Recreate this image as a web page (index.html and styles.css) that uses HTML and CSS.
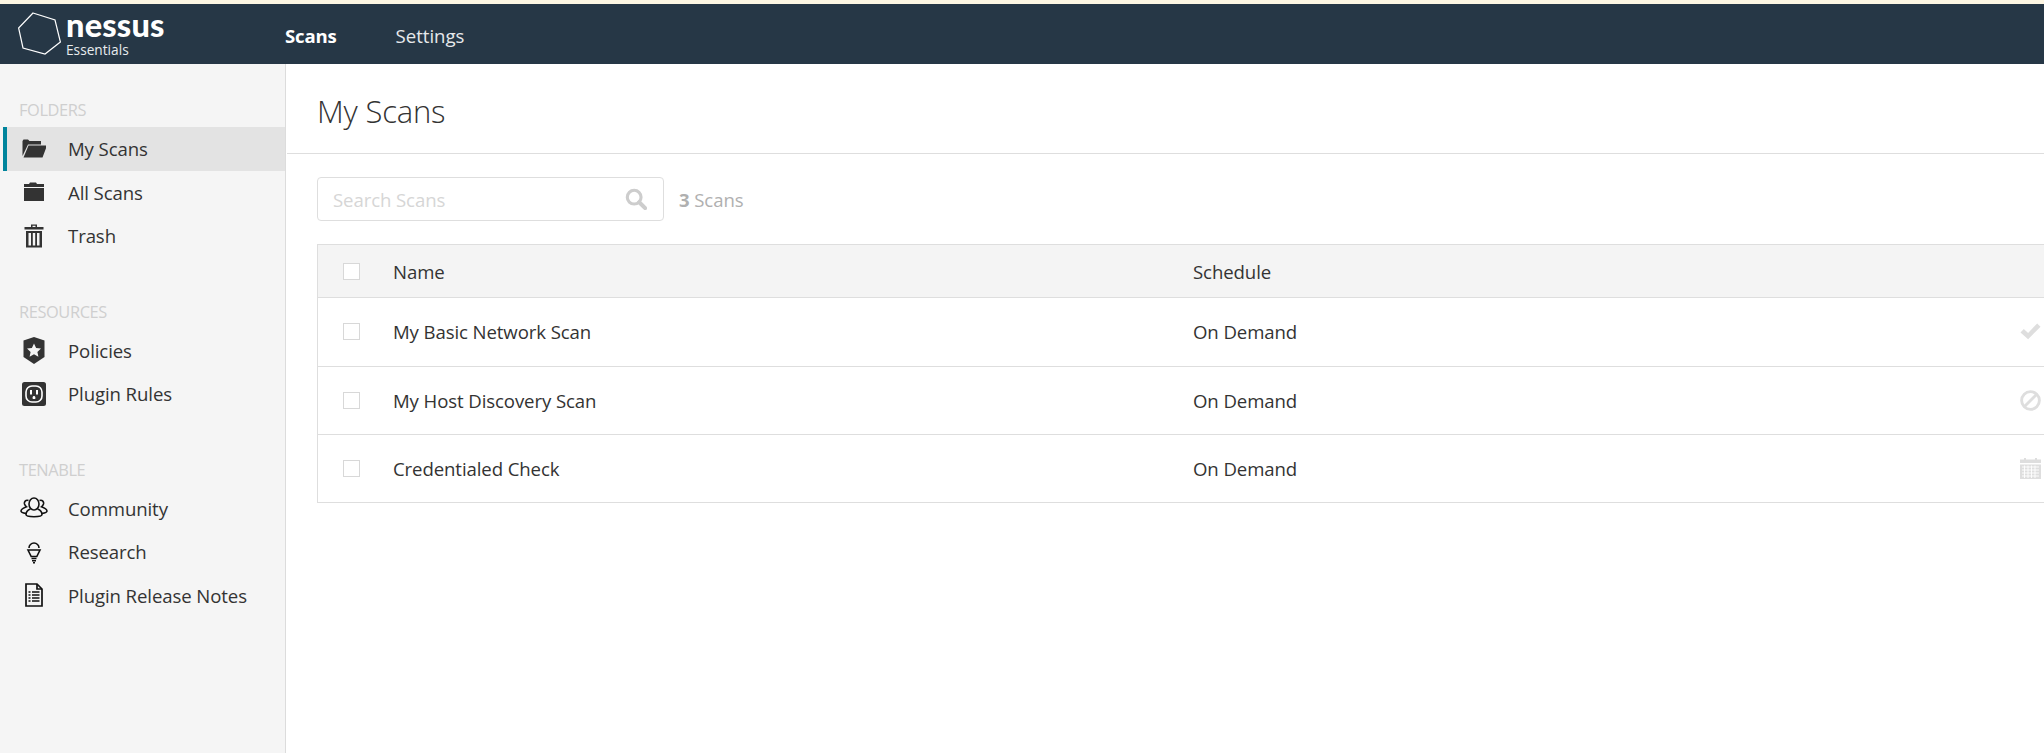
FILE: index.html
```html
<!DOCTYPE html>
<html lang="en">
<head>
  <meta charset="UTF-8">
  <meta name="viewport" content="width=device-width, initial-scale=1.0">
  <title>Nessus Essentials / Scans</title>
  <link rel="stylesheet" href="styles.css">
</head>
<body>
  <div class="top-strip"></div>

  <nav class="topnav">
    <a class="brand" href="#">
      <svg class="brand-mark" viewBox="0 0 44 44" width="44" height="44">
        <path d="M15 2 L37 9 L42.4 31 L27 43 L5 37 L0.6 17 Z" fill="none" stroke="#fff" stroke-width="1.2"/>
      </svg>
      <span class="brand-text">
        <span class="brand-name">nessus</span>
        <span class="brand-sub">Essentials</span>
      </span>
    </a>
    <a class="topnav-link active" href="#">Scans</a>
    <a class="topnav-link" href="#">Settings</a>
  </nav>

  <div class="layout">
    <aside class="sidebar">
      <h4 class="side-title">FOLDERS</h4>
      <a class="side-link active" href="#">
        <svg class="side-icon" viewBox="0 0 24 24"><path d="M0.5 4 L1.5 2.5 H6 L7.5 4 H19 V7.5 H6 L1 18 L0.5 19 Z M6.5 8.5 H25 L20.5 20.5 H1.5 Z" fill="#333"/></svg>
        My Scans
      </a>
      <a class="side-link" href="#">
        <svg class="side-icon" viewBox="0 0 24 24"><path d="M2 4 H7 L8 2.5 H14 L15 4 H22 V7 H2 Z M2 8 H22 V21 H2 Z" fill="#333"/></svg>
        All Scans
      </a>
      <a class="side-link" href="#">
        <svg class="side-icon" viewBox="0 0 24 24"><path d="M9 0.5 H15 V3 H21.5 V5.5 H2.5 V3 H9 Z M10.5 1.8 V3 H13.5 V1.8 Z M4 7 H20 V23.5 H4 Z M6.5 9 V21.5 H9 V9 Z M10.8 9 V21.5 H13.2 V9 Z M15 9 V21.5 H17.5 V9 Z" fill="#333" fill-rule="evenodd"/></svg>
        Trash
      </a>

      <h4 class="side-title">RESOURCES</h4>
      <a class="side-link" href="#">
        <svg class="side-icon tall" viewBox="0 0 24 27"><path d="M12 0 L22.5 3.5 V20 L12 27 L1.5 20 V3.5 Z" fill="#333"/><path d="M12 6.5 L14.1 11 L19 11.6 L15.4 14.9 L16.4 19.8 L12 17.3 L7.6 19.8 L8.6 14.9 L5 11.6 L9.9 11 Z" fill="#f5f5f5"/></svg>
        Policies
      </a>
      <a class="side-link" href="#">
        <svg class="side-icon" viewBox="0 0 24 24"><rect x="0" y="0" width="24" height="24" rx="2.5" fill="#333"/><rect x="4" y="4" width="16" height="16" rx="6" fill="none" stroke="#fff" stroke-width="1.6"/><rect x="8" y="8" width="2" height="4.5" fill="#fff"/><rect x="14" y="8" width="2" height="4.5" fill="#fff"/><path d="M10.7 17 V15.2 A1.3 1.3 0 0 1 13.3 15.2 V17 Z" fill="#fff"/></svg>
        Plugin Rules
      </a>

      <h4 class="side-title">TENABLE</h4>
      <a class="side-link" href="#">
        <svg class="side-icon wide" viewBox="0 0 28 24" fill="none" stroke="#111" stroke-width="1.6">
          <ellipse cx="14" cy="8" rx="5" ry="6"/>
          <path d="M10.5 13 C6.5 14.5 6 17 6 18.5 C6 21.5 22 21.5 22 18.5 C22 17 21.5 14.5 17.5 13"/>
          <path d="M8.5 4.5 C5.5 3.5 4 6 4.5 8 C5 9.5 5.5 10 6.5 10.8 C3.5 12 1 13.5 1 15 C1 16.5 3 17 6 17.5"/>
          <path d="M19.5 4.5 C22.5 3.5 24 6 23.5 8 C23 9.5 22.5 10 21.5 10.8 C24.5 12 27 13.5 27 15 C27 16.5 25 17 22 17.5"/>
        </svg>
        Community
      </a>
      <a class="side-link" href="#">
        <svg class="side-icon" viewBox="0 0 24 24" fill="none" stroke="#111" stroke-width="1.6">
          <path d="M7 8 A5 5 0 0 1 17 8"/>
          <path d="M6 10 H18 L14.8 16.5 H9.2 Z"/>
          <path d="M9.5 18.5 H14.5 M10 20.7 H14 M11 22.8 H13"/>
        </svg>
        Research
      </a>
      <a class="side-link" href="#">
        <svg class="side-icon" viewBox="0 0 24 24" fill="none" stroke="#111" stroke-width="1.7">
          <path d="M4 1 H15 L20 6 V23 H4 Z"/>
          <path d="M15 1 V6 H20"/>
          <path d="M6.5 9 H8.5 M10 9 H17.5 M6.5 12 H8.5 M10 12 H17.5 M6.5 15 H8.5 M10 15 H17.5 M6.5 18 H8.5 M10 18 H17.5" stroke-width="1.7"/>
        </svg>
        Plugin Release Notes
      </a>
    </aside>

    <main class="content">
      <h1 class="page-title">My Scans</h1>

      <div class="toolbar">
        <div class="search-box">
          <span class="search-placeholder">Search Scans</span>
          <svg class="search-icon" viewBox="0 0 24 24" fill="none" stroke="#cdcdcd">
            <circle cx="10" cy="10" r="7.5" stroke-width="3.4"/>
            <path d="M15.5 15.5 L22 22" stroke-width="4.4" stroke-linecap="round"/>
          </svg>
        </div>
        <span class="scan-count"><b>3</b> Scans</span>
      </div>

      <div class="scan-table">
        <div class="scan-row head">
          <span class="check"></span>
          <span class="col-name">Name</span>
          <span class="col-schedule">Schedule</span>
        </div>
        <div class="scan-row">
          <span class="check"></span>
          <span class="col-name">My Basic Network Scan</span>
          <span class="col-schedule">On Demand</span>
          <svg class="status-icon" viewBox="0 0 22 20"><path d="M0.5 11 L4 7.5 L8.5 11.5 L18 1.5 L21.5 5 L8.5 18 Z" fill="#dedede"/></svg>
        </div>
        <div class="scan-row">
          <span class="check"></span>
          <span class="col-name">My Host Discovery Scan</span>
          <span class="col-schedule">On Demand</span>
          <svg class="status-icon" viewBox="0 0 22 22" fill="none" stroke="#dedede" stroke-width="3"><circle cx="11" cy="11" r="9.3"/><path d="M5 17 L17 5"/></svg>
        </div>
        <div class="scan-row">
          <span class="check"></span>
          <span class="col-name">Credentialed Check</span>
          <span class="col-schedule">On Demand</span>
          <svg class="status-icon" viewBox="0 0 21 21"><path d="M0 1.5 H4 V0 H6 V1.5 H15 V0 H17 V1.5 H21 V5 H0 Z M0 6.5 H21 V21 H0 Z" fill="#dedede"/><path d="M2 9 H19 M2 12 H19 M2 15 H19 M2 18 H19 M4.5 7.5 V20 M8 7.5 V20 M11.5 7.5 V20 M15 7.5 V20" stroke="#fff" stroke-width="0.9"/></svg>
        </div>
      </div>
    </main>
  </div>
</body>
</html>
```

FILE: styles.css
```css
* {
  box-sizing: border-box;
}

html, body {
  height: 100%;
}

body {
  margin: 0;
  display: flex;
  flex-direction: column;
  font-family: "Open Sans", "Noto Sans", sans-serif;
  color: #333;
  background: #fff;
  overflow: hidden;
}

a {
  text-decoration: none;
  color: inherit;
}

.top-strip {
  height: 4px;
  background: #fdf6e3;
}

/* Top navigation */
.topnav {
  height: 60px;
  flex-shrink: 0;
  display: flex;
  align-items: center;
  background: #263746;
  color: #fff;
}

.brand {
  width: 285px;
  display: flex;
  align-items: center;
  gap: 4px;
  padding-left: 18px;
  margin-top: -2px;
}

.brand-text {
  display: flex;
  flex-direction: column;
  gap: 6px;
  padding-top: 5px;
}

.brand-name {
  font-family: "Lato", sans-serif;
  font-size: 32.5px;
  font-weight: 900;
  line-height: 22px;
  letter-spacing: 0.2px;
}

.brand-sub {
  font-size: 13.7px;
  line-height: 15px;
  color: #e8ecef;
}

.topnav-link {
  padding-top: 2px;
  font-size: 18.6px;
  margin-right: 59px;
  color: #e6e9ec;
}

.topnav-link.active {
  font-weight: 700;
  color: #fff;
  letter-spacing: -0.2px;
}

.layout {
  flex: 1;
  display: flex;
  min-height: 0;
}

/* Sidebar */
.sidebar {
  width: 286px;
  flex-shrink: 0;
  padding-top: 34px;
  background: #f5f5f5;
  border-right: 1px solid #dcdcdc;
}

.side-title {
  margin: 42px 0 5px 19px;
  font-size: 16.4px;
  font-weight: 400;
  line-height: 24px;
  letter-spacing: -0.4px;
  color: #cfcfcf;
}

.side-title:first-child {
  margin-top: 0;
}

.side-link {
  height: 43.5px;
  margin-left: 3px;
  padding-left: 15px;
  display: flex;
  align-items: center;
  gap: 22px;
  border-left: 4px solid transparent;
  font-size: 18.6px;
  letter-spacing: -0.1px;
}

.side-link.active {
  background: #e3e3e3;
  border-left-color: #00849c;
}

.side-icon {
  width: 24px;
  height: 24px;
  flex-shrink: 0;
}

.side-icon.tall {
  height: 27px;
}

.side-icon.wide {
  width: 28px;
  margin: 0 -2px;
}

/* Main content */
.content {
  flex: 1;
  min-width: 0;
  overflow: hidden;
}

.page-title {
  height: 90px;
  margin: 0 0 0 1px;
  padding: 23px 0 0 30px;
  border-bottom: 1px solid #dedede;
  font-size: 31px;
  font-weight: 300;
  line-height: 48px;
  letter-spacing: -0.2px;
}

.toolbar {
  display: flex;
  align-items: center;
  margin: 23px 0 0 31px;
}

.search-box {
  width: 347px;
  height: 44px;
  display: flex;
  align-items: center;
  justify-content: space-between;
  padding: 0 16px 0 15px;
  border: 1px solid #dedede;
  border-radius: 4px;
}

.search-placeholder {
  font-size: 18.6px;
  letter-spacing: -0.1px;
  color: #d6d6d6;
}

.search-icon {
  width: 22px;
  height: 22px;
}

.scan-count {
  margin-left: 15px;
  font-size: 18.6px;
  letter-spacing: -0.1px;
  color: #b0b0b0;
}

.scan-table {
  width: 1780px;
  margin: 23px 0 0 31px;
  border: 1px solid #dedede;
}

.scan-row {
  height: 68.5px;
  display: flex;
  align-items: center;
  padding-left: 25px;
  border-bottom: 1px solid #dedede;
  font-size: 18.6px;
  letter-spacing: -0.1px;
}

.scan-row:last-child {
  height: 67px;
  border-bottom: 0;
}

.scan-row.head {
  height: 53px;
  background: #f4f4f4;
}

.check {
  width: 17px;
  height: 17px;
  flex-shrink: 0;
  background: #fff;
  border: 1px solid #d8d8d8;
}

.col-name {
  width: 800px;
  margin-left: 33px;
}

.col-schedule {
  width: 827px;
}

.status-icon {
  width: 21px;
  height: 21px;
  flex-shrink: 0;
}
```
